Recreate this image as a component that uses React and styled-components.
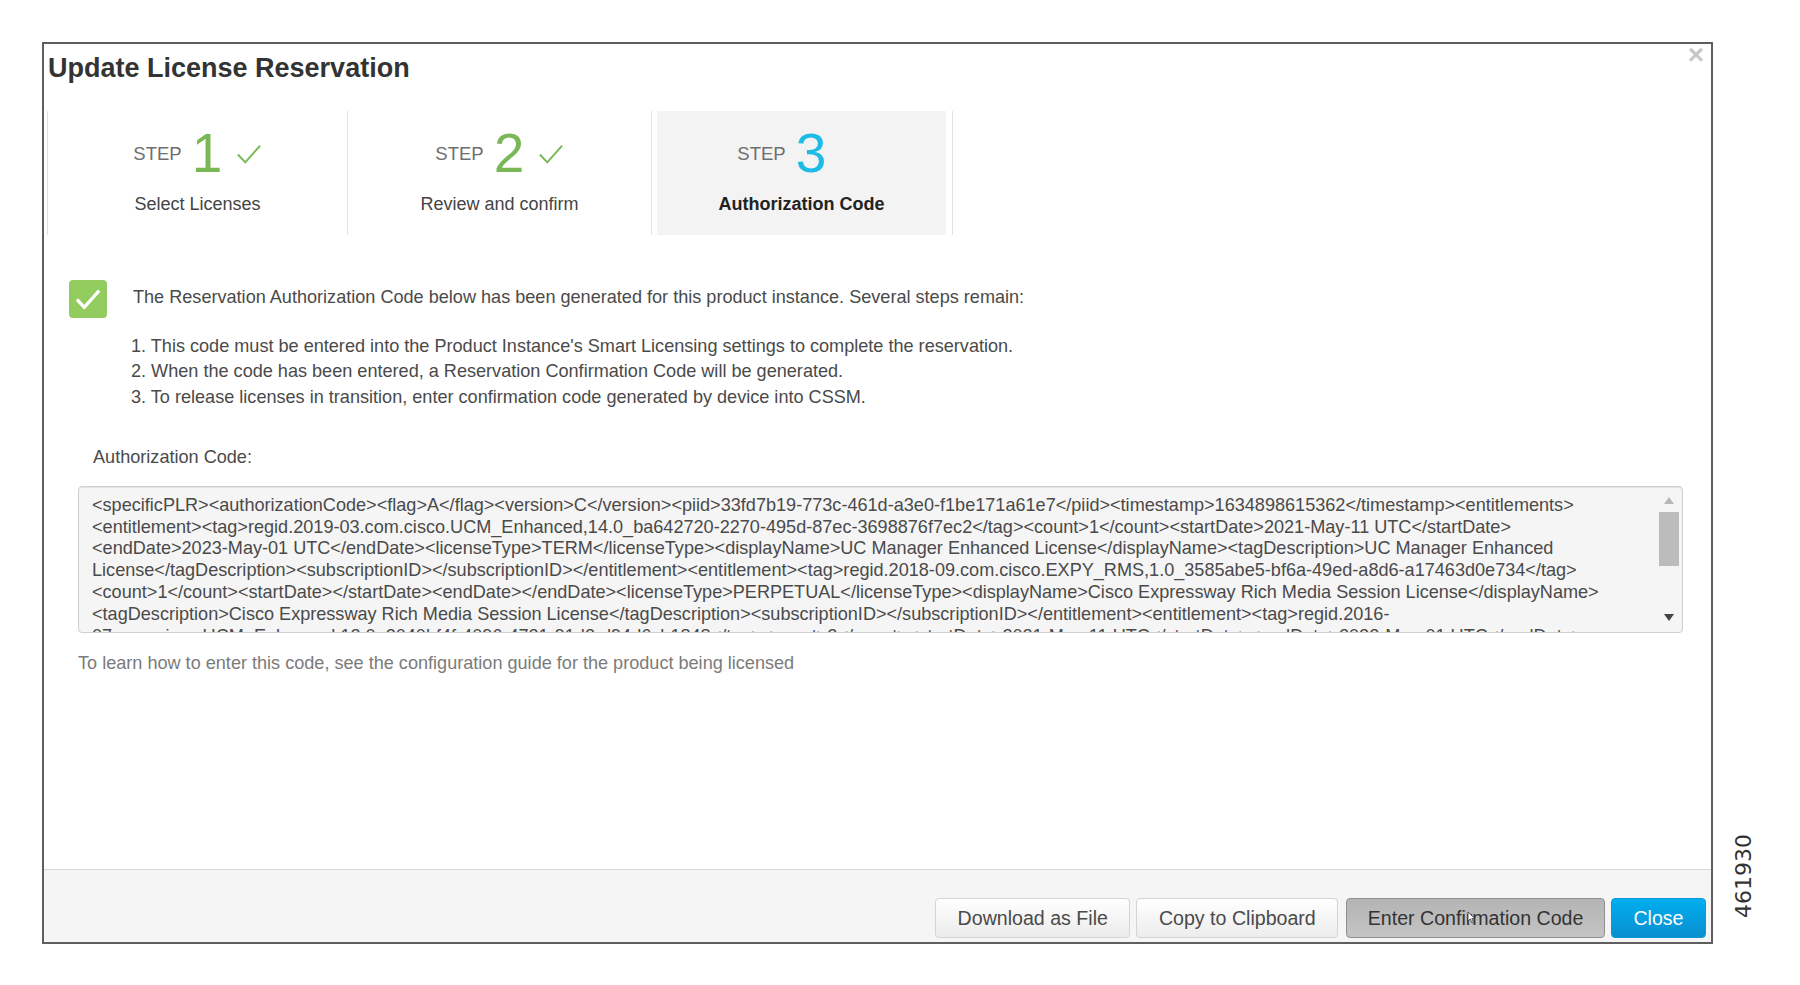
import React from 'react';
import styled, { createGlobalStyle } from 'styled-components';

const GlobalStyle = createGlobalStyle`
  html, body {
    margin: 0;
    padding: 0;
    background: #fff;
    font-family: "Liberation Sans", Arial, sans-serif;
  }
`;

const codeLines = [
  '<specificPLR><authorizationCode><flag>A</flag><version>C</version><piid>33fd7b19-773c-461d-a3e0-f1be171a61e7</piid><timestamp>1634898615362</timestamp><entitlements>',
  '<entitlement><tag>regid.2019-03.com.cisco.UCM_Enhanced,14.0_ba642720-2270-495d-87ec-3698876f7ec2</tag><count>1</count><startDate>2021-May-11 UTC</startDate>',
  '<endDate>2023-May-01 UTC</endDate><licenseType>TERM</licenseType><displayName>UC Manager Enhanced License</displayName><tagDescription>UC Manager Enhanced',
  'License</tagDescription><subscriptionID></subscriptionID></entitlement><entitlement><tag>regid.2018-09.com.cisco.EXPY_RMS,1.0_3585abe5-bf6a-49ed-a8d6-a17463d0e734</tag>',
  '<count>1</count><startDate></startDate><endDate></endDate><licenseType>PERPETUAL</licenseType><displayName>Cisco Expressway Rich Media Session License</displayName>',
  '<tagDescription>Cisco Expressway Rich Media Session License</tagDescription><subscriptionID></subscriptionID></entitlement><entitlement><tag>regid.2016-',
  '07.com.cisco.UCM_Enhanced,12.0_2040bf4f-4096-4721-91d2-d94d6cb1848</tag><count>2</count><startDate>2021-May-11 UTC</startDate><endDate>2022-May-01 UTC</endDate>',
];

const steps = [
  { number: 1, label: 'Select Licenses', done: true },
  { number: 2, label: 'Review and confirm', done: true },
  { number: 3, label: 'Authorization Code', done: false },
];

const CheckMark = ({ size = 26, color = '#7ab857', width = 2.2 }) => (
  <svg width={size} height={size} viewBox="0 0 28 28" fill="none">
    <path d="M2 14.5 L10 23 L26 5" stroke={color} strokeWidth={width} />
  </svg>
);

const App = () => (
  <Page>
    <GlobalStyle />
    <Modal>
      <CloseX>×</CloseX>
      <Title>Update License Reservation</Title>
      <StepRow>
        {steps.map((step) => (
          <Step key={step.number} $active={!step.done}>
            <StepInner $active={!step.done}>
              <StepHead>
                <StepWord>STEP</StepWord>
                <StepNumber $active={!step.done}>{step.number}</StepNumber>
                <StepCheck>{step.done && <CheckMark />}</StepCheck>
              </StepHead>
              <StepLabel $active={!step.done}>{step.label}</StepLabel>
            </StepInner>
          </Step>
        ))}
      </StepRow>
      <Body>
        <Message>
          <SuccessIcon>
            <CheckMark size={26} color="#fff" width={3.5} />
          </SuccessIcon>
          <MessageText>
            The Reservation Authorization Code below has been generated for this product instance. Several steps remain:
          </MessageText>
        </Message>
        <Instructions>
          <li>1. This code must be entered into the Product Instance's Smart Licensing settings to complete the reservation.</li>
          <li>2. When the code has been entered, a Reservation Confirmation Code will be generated.</li>
          <li>3. To release licenses in transition, enter confirmation code generated by device into CSSM.</li>
        </Instructions>
        <CodeLabel>Authorization Code:</CodeLabel>
        <CodeBox>
          <CodeText>
            {codeLines.map((line) => (
              <CodeLine key={line}>{line}</CodeLine>
            ))}
          </CodeText>
          <ScrollTrack>
            <ArrowUp />
            <Thumb />
            <ArrowDown />
          </ScrollTrack>
        </CodeBox>
        <HelpText>To learn how to enter this code, see the configuration guide for the product being licensed</HelpText>
      </Body>
      <Footer>
        <Button>Download as File</Button>
        <Button>Copy to Clipboard</Button>
        <Button $variant="pressed">
          Enter Confirmation Code
          <Cursor width="9" height="13" viewBox="0 0 9 13">
            <path d="M1 1 L1 10 L3.2 8 L5 12 L6.5 11.3 L4.8 7.6 L7.8 7.4 Z" fill="#fff" stroke="#333" strokeWidth="0.8" />
          </Cursor>
        </Button>
        <Button $variant="primary">Close</Button>
      </Footer>
    </Modal>
    <FigureId>461930</FigureId>
  </Page>
);

const Page = styled.div`
  width: 1800px;
  height: 985px;
  box-sizing: border-box;
  padding: 42px 0 0 42px;
  display: flex;
  align-items: flex-start;
  overflow: hidden;
`;

const Modal = styled.div`
  position: relative;
  width: 1671px;
  height: 902px;
  box-sizing: border-box;
  border: 2px solid #5f5f5f;
  display: flex;
  flex-direction: column;
  background: #fff;
`;

const CloseX = styled.span`
  position: absolute;
  top: -4px;
  right: 7px;
  font-size: 28px;
  font-weight: 700;
  line-height: 30px;
  color: #c8c8c8;
`;

const Title = styled.h1`
  margin: 0;
  padding: 9px 0 0 4px;
  height: 58px;
  box-sizing: border-box;
  font-size: 27px;
  line-height: 30px;
  font-weight: 700;
  color: #333;
`;

const StepRow = styled.div`
  display: flex;
  height: 124px;
  padding-left: 3px;
  margin-top: 9px;
`;

const Step = styled.div`
  width: 302px;
  box-sizing: border-box;
  border-left: 1px solid #e2e2e2;
  padding-left: ${(p) => (p.$active ? '6px' : '0')};
  &:first-child {
    width: 300px;
  }
  &:nth-child(2) {
    width: 304px;
  }
  &:last-child {
    border-right: 1px solid #e2e2e2;
    padding-right: 6px;
  }
`;

const StepInner = styled.div`
  height: 100%;
  display: flex;
  flex-direction: column;
  align-items: center;
  background: ${(p) => (p.$active ? '#f3f3f3' : 'transparent')};
  margin-left: ${(p) => (p.$active ? '-1px' : '0')};
`;

const StepHead = styled.div`
  display: flex;
  align-items: center;
  height: 60px;
  margin-top: 12px;
  margin-left: 6px;
`;

const StepWord = styled.span`
  font-size: 18.5px;
  color: #6f6f6f;
  margin-right: 10px;
  margin-top: 2px;
`;

const StepNumber = styled.span`
  font-size: 55px;
  line-height: 60px;
  width: 36px;
  color: ${(p) => (p.$active ? '#1ebbe6' : '#7ab857')};
`;

const StepCheck = styled.span`
  width: 40px;
  padding-left: 8px;
  box-sizing: border-box;
  display: flex;
  margin-top: 2px;
`;

const StepLabel = styled.div`
  margin-top: 9px;
  font-size: 18px;
  line-height: 24px;
  color: ${(p) => (p.$active ? '#222' : '#444')};
  font-weight: ${(p) => (p.$active ? 700 : 400)};
`;

const Body = styled.div`
  flex: 1;
  padding: 45px 28px 0 34px;
  color: #4a4a4a;
  font-size: 18.1px;
`;

const Message = styled.div`
  display: flex;
  align-items: flex-start;
  gap: 26px;
  margin-left: -9px;
`;

const SuccessIcon = styled.div`
  width: 38px;
  height: 38px;
  border-radius: 4px;
  background: #93cc5e;
  display: flex;
  align-items: center;
  justify-content: center;
  flex-shrink: 0;
`;

const MessageText = styled.div`
  line-height: 24px;
  padding-top: 5px;
`;

const Instructions = styled.ol`
  list-style: none;
  margin: 16px 0 0;
  padding: 0 0 0 53px;
  line-height: 25.3px;
`;

const CodeLabel = styled.div`
  margin: 35px 0 0 15px;
  line-height: 24px;
`;

const CodeBox = styled.div`
  margin: 17px 0 0;
  height: 147px;
  box-sizing: border-box;
  border: 1px solid #cfcfcf;
  border-radius: 4px;
  background: #f5f5f5;
  box-shadow: inset 0 1px 1px rgba(0, 0, 0, 0.08);
  display: flex;
  overflow: hidden;
`;

const CodeText = styled.div`
  flex: 1;
  min-width: 0;
  padding: 8px 0 0 13px;
  overflow: hidden;
  font-size: 18.1px;
  line-height: 21.8px;
  color: #4a4a4a;
`;

const CodeLine = styled.div`
  white-space: nowrap;
`;

const ScrollTrack = styled.div`
  width: 26px;
  flex-shrink: 0;
  display: flex;
  flex-direction: column;
  align-items: center;
  padding-top: 10px;
`;

const ArrowUp = styled.div`
  width: 0;
  height: 0;
  border-left: 5px solid transparent;
  border-right: 5px solid transparent;
  border-bottom: 7px solid #b8b8b8;
`;

const Thumb = styled.div`
  width: 20px;
  height: 54px;
  margin-top: 8px;
  background: #bcbcbc;
`;

const ArrowDown = styled.div`
  width: 0;
  height: 0;
  margin-top: 48px;
  border-left: 5px solid transparent;
  border-right: 5px solid transparent;
  border-top: 7px solid #444;
`;

const HelpText = styled.div`
  margin-top: 18px;
  line-height: 24px;
  color: #7b7b7b;
`;

const Footer = styled.div`
  height: 73px;
  box-sizing: border-box;
  border-top: 1px solid #d8d8d8;
  background: #f5f5f5;
  padding: 28px 5px 4px 0;
  display: flex;
  justify-content: flex-end;
  align-items: stretch;
  gap: 6px;
`;

const variants = {
  default: `
    background: linear-gradient(#ffffff, #ececec);
    border: 1px solid #d4d4d4;
    color: #4a4a4a;
    padding: 0 21.5px;
  `,
  pressed: `
    background: linear-gradient(#b4b4b4, #c4c4c4);
    border: 1px solid #8f8f8f;
    color: #333;
    margin-left: 2px;
    padding: 0 20.5px;
  `,
  primary: `
    background: linear-gradient(#00aeef, #0a8fd0);
    border: 1px solid #0a9ad8;
    color: #fff;
    padding: 0 21.5px;
  `,
};

const Button = styled.button`
  position: relative;
  border-radius: 4px;
  font-family: inherit;
  font-size: 19.6px;
  ${(p) => variants[p.$variant || 'default']}
`;

const Cursor = styled.svg`
  position: absolute;
  left: 120px;
  top: 12px;
`;

const FigureId = styled.div`
  align-self: flex-end;
  margin: 0 0 67px 18px;
  writing-mode: vertical-rl;
  transform: rotate(180deg);
  font-family: "DejaVu Sans", sans-serif;
  font-size: 22px;
  line-height: 26px;
  color: #333;
`;

export default App;
